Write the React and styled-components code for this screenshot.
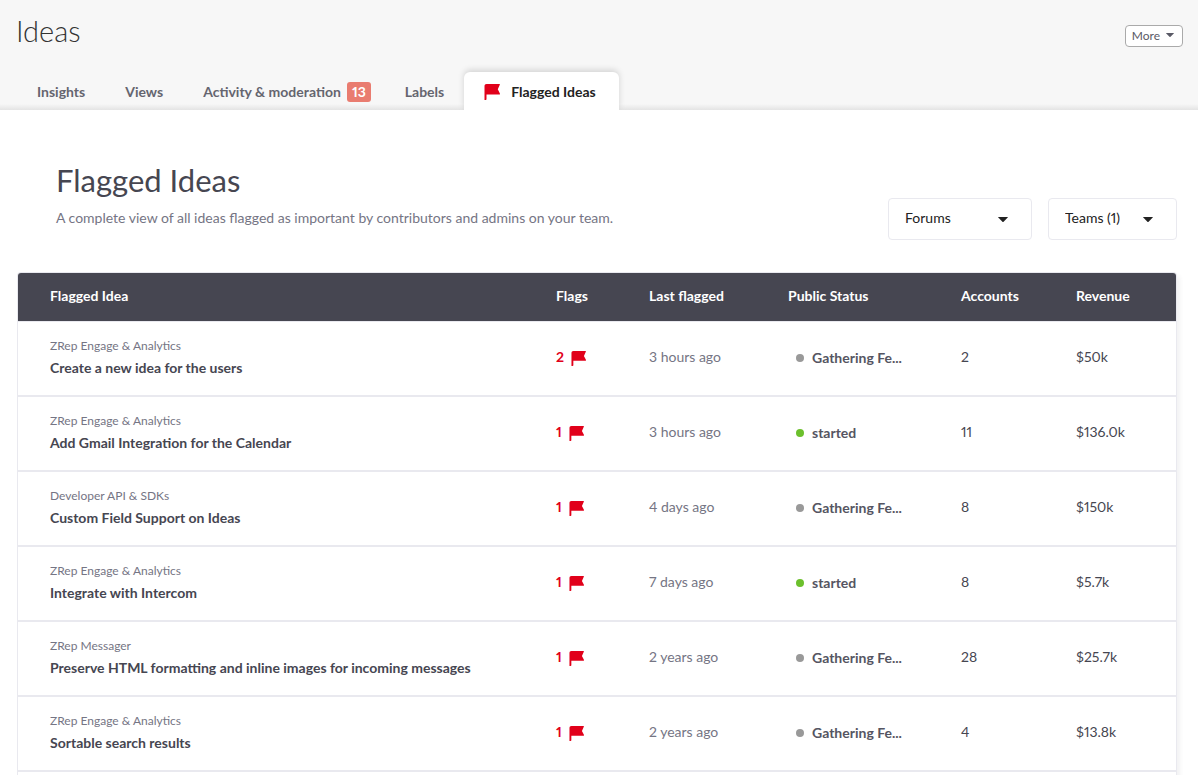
import React from "react";
import styled, { createGlobalStyle } from "styled-components";

const GlobalStyle = createGlobalStyle`
  * {
    box-sizing: border-box;
  }
  body {
    margin: 0;
    background: #fff;
    color: #464651;
    font-family: Lato, "Open Sans", sans-serif;
    font-size: 14px;
    font-variant-numeric: proportional-nums;
    line-height: 20px;
  }
`;

const Page = styled.div`
  display: flex;
  flex-direction: column;
  min-height: 100vh;
`;

const Header = styled.header`
  display: flex;
  flex-direction: column;
  gap: 18px;
  background: linear-gradient(#f7f7f7 calc(100% - 6px), #e4e4e4);
`;

const TitleBar = styled.div`
  display: flex;
  align-items: flex-start;
  justify-content: space-between;
  padding: 8px 15px 0 16px;
`;

const AppTitle = styled.h1`
  margin: 0;
  color: #333;
  font-size: 29px;
  font-weight: 300;
  line-height: 46px;
`;

const MoreButton = styled.button`
  display: flex;
  align-items: center;
  gap: 6px;
  height: 22px;
  margin-top: 17px;
  padding: 0 8px 2px 6px;
  border: 1px solid #aaa;
  border-radius: 4px;
  background: #fff;
  color: #5a5a66;
  font-family: inherit;
  font-size: 12px;
`;

const Tabs = styled.nav`
  display: flex;
  align-items: flex-end;
  padding-left: 17px;
  height: 38px;
`;

const Tab = styled.a`
  display: flex;
  align-items: center;
  gap: ${(props) => (props.$active ? "11px" : "6px")};
  height: 38px;
  padding: ${(props) => (props.$active ? "2px 23px 0 20px" : "2px 20px 0")};
  border-radius: 6px 6px 0 0;
  background: ${(props) => (props.$active ? "#fff" : "transparent")};
  box-shadow: ${(props) =>
    props.$active ? "0 -2px 6px rgba(0, 0, 0, 0.15)" : "none"};
  clip-path: inset(-10px -10px 0);
  color: ${(props) => (props.$active ? "#222" : "#65656f")};
  font-weight: 700;
  text-decoration: none;
`;

const Badge = styled.span`
  margin-right: -6px;
  padding: 0 5px;
  border-radius: 3px;
  background: #e97c70;
  color: #fff;
`;

const Intro = styled.section`
  display: flex;
  align-items: flex-end;
  justify-content: space-between;
  padding: 49px 21px 0 56px;
`;

const Heading = styled.h2`
  margin: 0 0 7px;
  font-size: 31px;
  font-weight: 400;
  line-height: 42px;
`;

const Description = styled.p`
  margin: 0 0 12px;
  color: #757584;
`;

const Filters = styled.div`
  display: flex;
  gap: 16px;
`;

const FilterBox = styled.div`
  position: relative;
  width: ${(props) => props.$width};

  svg {
    position: absolute;
    top: 19px;
    right: 24px;
    color: #222;
    pointer-events: none;
  }
`;

const Select = styled.select`
  appearance: none;
  width: 100%;
  height: 42px;
  padding: 0 16px 3px;
  border: 1px solid #e9e9ef;
  border-radius: 4px;
  background: #fff;
  color: #222;
  font-family: inherit;
  font-size: 14px;
  font-variant-numeric: inherit;
`;

const Card = styled.section`
  flex: 1;
  margin: 32px 21px 0 17px;
  border: solid #e9e9ef;
  border-width: 1px 1px 0;
  border-radius: 4px 4px 0 0;
  box-shadow: 3px 4px 4px rgba(70, 70, 81, 0.07);
`;

const Table = styled.table`
  width: 100%;
  border-spacing: 0;
  table-layout: fixed;
`;

const HeadCell = styled.th`
  width: ${(props) => props.$width};
  height: 49px;
  padding: 0 0 2px;
  border-bottom: 1px solid #e9e9ef;
  background: #464651;
  background-clip: padding-box;
  color: #fff;
  font-weight: 700;
  text-align: left;

  &:first-child {
    padding-left: 32px;
    border-top-left-radius: 3px;
  }
  &:last-child {
    border-top-right-radius: 3px;
  }
`;

const Cell = styled.td`
  height: 75px;
  padding: 0 0 4px;
  border-bottom: 2px solid #e9e9ef;
  color: ${(props) => (props.$muted ? "#757584" : "#464651")};

  &:first-child {
    padding-left: 32px;
  }
`;

const Forum = styled.div`
  color: #757584;
  font-size: 12px;
`;

const IdeaLink = styled.a`
  display: block;
  padding-top: 2px;
  color: #464651;
  font-weight: 700;
  text-decoration: none;
`;

const FlagCount = styled.span`
  display: flex;
  align-items: center;
  gap: 7px;
  color: #e1001a;
  font-weight: 700;

  svg {
    margin-top: 3px;
  }
`;

const Status = styled.span`
  display: flex;
  align-items: center;
  gap: 8px;
  padding: 2px 0 0 8px;
  color: #555562;
  font-weight: 700;

  &::before {
    content: "";
    width: 8px;
    height: 8px;
    border-radius: 50%;
    background: ${(props) => (props.$started ? "#6cc02c" : "#999")};
  }
`;

const Flag = ({ size = 15 }) => (
  <svg width={size} height={size} viewBox="0 0 16 16" aria-hidden="true">
    <path
      fill="#e1001a"
      d="M2.6 0H15.8V.8L13.8 5.2L15.9 9.4V10.4H2.5V15.2Q2.5 16 1.6 16H.5V2.2C.5.8 1.2 0 2.6 0Z"
    />
  </svg>
);

const Caret = ({ width = 10, height = 5 }) => (
  <svg width={width} height={height} viewBox="0 0 10 5" aria-hidden="true">
    <path
      fill="currentColor"
      d="M.5 0H9.5Q10.2 0 9.7.6L5.6 4.7Q5 5.2 4.4 4.7L.3.6Q-.2 0 .5 0Z"
    />
  </svg>
);

const Filter = ({ label, text, width }) => (
  <FilterBox $width={width}>
    <Select aria-label={label}>
      <option>{text}</option>
    </Select>
    <Caret />
  </FilterBox>
);

const columns = [
  { title: "Flagged Idea" },
  { title: "Flags", width: "93px" },
  { title: "Last flagged", width: "139px" },
  { title: "Public Status", width: "173px" },
  { title: "Accounts", width: "115px" },
  { title: "Revenue", width: "100px" },
];

const ideas = [
  {
    forum: "ZRep Engage & Analytics",
    title: "Create a new idea for the users",
    flags: 2,
    last: "3 hours ago",
    status: "Gathering Fe...",
    accounts: 2,
    revenue: "$50k",
  },
  {
    forum: "ZRep Engage & Analytics",
    title: "Add Gmail Integration for the Calendar",
    flags: 1,
    last: "3 hours ago",
    status: "started",
    accounts: 11,
    revenue: "$136.0k",
  },
  {
    forum: "Developer API & SDKs",
    title: "Custom Field Support on Ideas",
    flags: 1,
    last: "4 days ago",
    status: "Gathering Fe...",
    accounts: 8,
    revenue: "$150k",
  },
  {
    forum: "ZRep Engage & Analytics",
    title: "Integrate with Intercom",
    flags: 1,
    last: "7 days ago",
    status: "started",
    accounts: 8,
    revenue: "$5.7k",
  },
  {
    forum: "ZRep Messager",
    title: "Preserve HTML formatting and inline images for incoming messages",
    flags: 1,
    last: "2 years ago",
    status: "Gathering Fe...",
    accounts: 28,
    revenue: "$25.7k",
  },
  {
    forum: "ZRep Engage & Analytics",
    title: "Sortable search results",
    flags: 1,
    last: "2 years ago",
    status: "Gathering Fe...",
    accounts: 4,
    revenue: "$13.8k",
  },
];

const IdeaRow = ({ idea }) => (
  <tr>
    <Cell>
      <Forum>{idea.forum}</Forum>
      <IdeaLink href="#">{idea.title}</IdeaLink>
    </Cell>
    <Cell>
      <FlagCount>
        {idea.flags}
        <Flag />
      </FlagCount>
    </Cell>
    <Cell $muted>{idea.last}</Cell>
    <Cell>
      <Status $started={idea.status === "started"}>{idea.status}</Status>
    </Cell>
    <Cell>{idea.accounts}</Cell>
    <Cell>{idea.revenue}</Cell>
  </tr>
);

const App = () => (
  <Page>
    <GlobalStyle />
    <Header>
      <TitleBar>
        <AppTitle>Ideas</AppTitle>
        <MoreButton type="button" aria-haspopup="menu">
          More
          <Caret width={8} height={4} />
        </MoreButton>
      </TitleBar>
      <Tabs>
        <Tab href="#">Insights</Tab>
        <Tab href="#">Views</Tab>
        <Tab href="#">
          Activity & moderation
          <Badge>13</Badge>
        </Tab>
        <Tab href="#">Labels</Tab>
        <Tab href="#" $active aria-current="page">
          <Flag size={16} />
          Flagged Ideas
        </Tab>
      </Tabs>
    </Header>
    <Intro>
      <div>
        <Heading>Flagged Ideas</Heading>
        <Description>
          A complete view of all ideas flagged as important by contributors and
          admins on your team.
        </Description>
      </div>
      <Filters>
        <Filter label="Forums" text="Forums" width="144px" />
        <Filter label="Teams" text="Teams (1)" width="129px" />
      </Filters>
    </Intro>
    <Card>
      <Table>
        <thead>
          <tr>
            {columns.map((column) => (
              <HeadCell key={column.title} $width={column.width}>
                {column.title}
              </HeadCell>
            ))}
          </tr>
        </thead>
        <tbody>
          {ideas.map((idea) => (
            <IdeaRow key={idea.title} idea={idea} />
          ))}
        </tbody>
      </Table>
    </Card>
  </Page>
);

export default App;
